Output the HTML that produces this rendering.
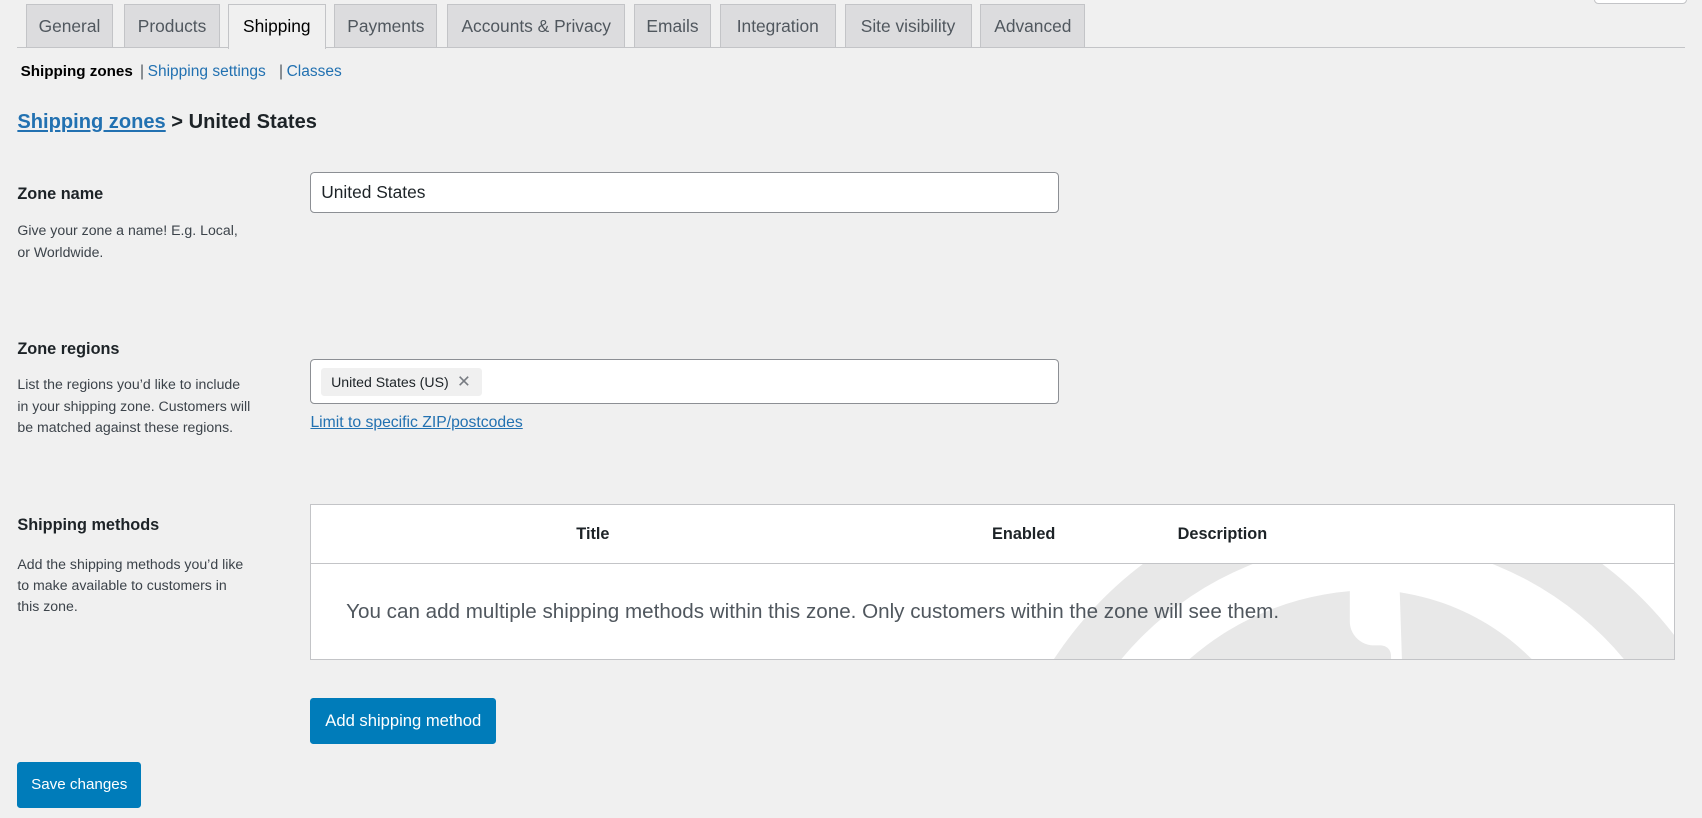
<!DOCTYPE html>
<html><head><meta charset="utf-8"><style>
html{margin:0;padding:0;background:#f0f0f0;overflow:hidden;height:818px}
body{margin:0;padding:0;background:#f0f0f0;overflow:hidden;width:1568px;height:750px;zoom:1.0855;position:relative;font-family:"Liberation Sans",sans-serif;color:#1d2327}
.a{position:absolute;white-space:nowrap}
.tab{position:absolute;top:4px;height:39px;background:#dcdcde;border:1px solid #c3c4c7;border-bottom:none;font-size:16px;color:#50575e;line-height:39px;text-align:center;box-sizing:border-box}
.tab.on{background:#f0f0f0;color:#000;height:41px}
.lbl{font-weight:bold;font-size:15px;left:16px}
.desc{font-size:13px;color:#3c434a;left:16px;line-height:19.5px}
.lnk{color:#2271b1}
.inp{position:absolute;left:286px;width:690px;background:#fff;border:1px solid #8c8f94;border-radius:4px;box-sizing:border-box}
.btn{position:absolute;background:#007cba;color:#fff;border-radius:3px;font-size:15.3px;text-align:center}
</style></head><body>
<div class="a" style="left:1468px;top:-10px;width:84px;height:12px;background:#fff;border:1px solid #c3c4c7;border-radius:4px"></div>
<div class="a" style="left:16px;top:43px;width:1536px;height:1px;background:#c3c4c7"></div>
<div class="tab" style="left:24px;width:80px">General</div>
<div class="tab" style="left:114px;width:89px">Products</div>
<div class="tab on" style="left:210px;width:90px">Shipping</div>
<div class="tab" style="left:308px;width:95px">Payments</div>
<div class="tab" style="left:412px;width:164px">Accounts &amp; Privacy</div>
<div class="tab" style="left:584px;width:71px">Emails</div>
<div class="tab" style="left:663px;width:107px">Integration</div>
<div class="tab" style="left:778px;width:117px">Site visibility</div>
<div class="tab" style="left:903px;width:97px">Advanced</div>

<div class="a" style="left:19px;top:57px;font-size:14px;line-height:18px"><b style="color:#000">Shipping zones</b></div>
<div class="a" style="left:129px;top:57px;font-size:14.3px;line-height:18px;color:#50575e">|</div>
<div class="a lnk" style="left:136px;top:57px;font-size:14.3px;line-height:18px">Shipping settings</div>
<div class="a" style="left:257px;top:57px;font-size:14.3px;line-height:18px;color:#50575e">|</div>
<div class="a lnk" style="left:264px;top:57px;font-size:14.3px;line-height:18px">Classes</div>

<div class="a" style="left:16px;top:100px;font-size:18.5px;font-weight:bold;line-height:24px"><span style="color:#2271b1;text-decoration:underline">Shipping zones</span> &gt; United States</div>

<div class="a lbl" style="top:170px">Zone name</div>
<div class="a desc" style="top:203px">Give your zone a name! E.g. Local,<br>or Worldwide.</div>
<div class="inp" style="top:158px;height:38px;font-size:16px;line-height:36px;padding-left:9px">United States</div>

<div class="a lbl" style="top:313px">Zone regions</div>
<div class="a desc" style="top:345px">List the regions you’d like to include<br>in your shipping zone. Customers will<br>be matched against these regions.</div>
<div class="inp" style="top:331px;height:41px"></div>
<div class="a" style="left:296px;top:339px;width:148px;height:26px;background:#f0f0f0;border-radius:3px;font-size:13px;line-height:26px;padding-left:9px;box-sizing:border-box;color:#1d2327">United States (US) <span style="color:#787c82;font-size:15px;margin-left:4px">✕</span></div>
<div class="a" style="left:286px;top:381px;font-size:14.5px;color:#2271b1;text-decoration:underline">Limit to specific ZIP/postcodes</div>

<div class="a lbl" style="top:475px">Shipping methods</div>
<div class="a desc" style="top:510px">Add the shipping methods you’d like<br>to make available to customers in<br>this zone.</div>

<div class="a" style="left:286px;top:464px;width:1257px;height:144px;background:#fff;border:1px solid #c3c4c7;box-sizing:border-box;overflow:hidden">
 <svg width="1257" height="88" style="position:absolute;left:0;top:55px">
  <g transform="translate(-287,-520)" fill="#e8e8e8">
   <path fill-rule="evenodd" d="M914 800a351 351 0 1 0 702 0a351 351 0 1 0-702 0zM964 800a301 301 0 1 1 602 0a301 301 0 1 1-602 0z"/>
   <path d="M1290 546c50 8 90 30 122 62l-120 0z"/>
   <path d="M1009 800a256 256 0 0 1 235-255v28c0 12 10 22 22 22h6c6 0 10 4 10 10V620H1009z"/>
  </g>
 </svg>
 <div class="a" style="left:0;width:1255px;top:54px;height:1px;background:#c3c4c7"></div>
 <div class="a" style="left:244px;top:19px;font-size:15px;font-weight:bold">Title</div>
 <div class="a" style="left:627px;top:19px;font-size:15px;font-weight:bold">Enabled</div>
 <div class="a" style="left:798px;top:19px;font-size:15px;font-weight:bold">Description</div>
 <div class="a" style="left:32px;top:88px;font-size:19px;color:#50575e">You can add multiple shipping methods within this zone. Only customers within the zone will see them.</div>
</div>

<div class="btn" style="left:286px;top:643px;width:171px;height:42px;line-height:42px">Add shipping method</div>
<div class="btn" style="left:16px;top:702px;width:114px;height:42px;line-height:42px;font-size:14px">Save changes</div>
</body></html>
